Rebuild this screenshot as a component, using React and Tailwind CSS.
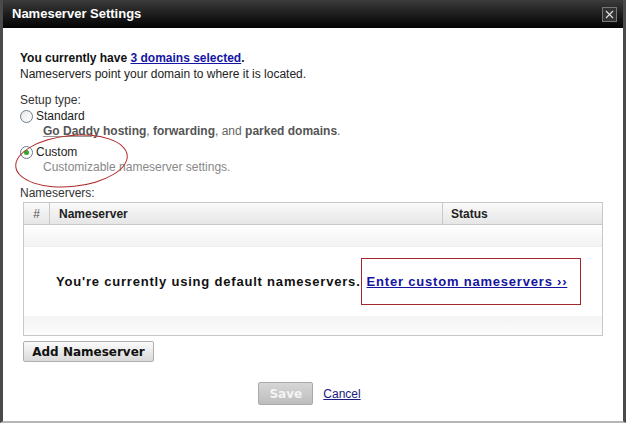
export default function App() {
  return (
    <div className="relative h-[423px] w-[626px] overflow-hidden bg-white font-['Liberation_Sans',Arial,sans-serif] text-[12px] text-[#222]">
      <div className="flex h-full flex-col border-x-[3px] border-b-2 border-x-[#4a4a4a] border-b-[#b5b5b5]">
        {/* title bar */}
        <div className="flex h-[28px] shrink-0 items-center justify-between bg-gradient-to-b from-[#3c3c3c] to-[#050505] pl-[9px] pr-[6px]">
          <span className="text-[13px] font-bold text-white">Nameserver Settings</span>
          <span className="flex h-[15px] w-[15px] items-center justify-center border border-[#777] bg-[#333] text-[13px] leading-none text-white">
            <svg width="9" height="9" viewBox="0 0 9 9" stroke="#ddd" strokeWidth="1.2">
              <path d="M1 1L8 8M8 1L1 8" />
            </svg>
          </span>
        </div>

        <div className="relative flex flex-1 flex-col pl-[17px] pr-[20px] pt-[22px]">
          <p className="font-bold leading-[16px] text-[#111]">
            You currently have <a className="text-[#1515a6] underline">3 domains selected</a>.
          </p>
          <p className="leading-[16px]">Nameservers point your domain to where it is located.</p>

          <p className="mt-[10px] leading-[16px] text-[#333]">Setup type:</p>
          <div className="flex items-center gap-[3px] leading-[16px]">
            <span className="h-[13px] w-[13px] rounded-full border border-[#6b7c8c] bg-gradient-to-br from-[#e8e8e8] to-white" />
            <span>Standard</span>
          </div>
          <p className="pl-[23px] leading-[15px] text-[#666]">
            <b className="text-[#555] underline decoration-[#999]">Go Daddy</b> <b className="text-[#555]">hosting</b>, <b className="text-[#555]">forwarding</b>, and <b className="text-[#555]">parked domains</b>.
          </p>
          <div className="mt-[5px] flex items-center gap-[3px] leading-[16px]">
            <span className="flex h-[13px] w-[13px] items-center justify-center rounded-full border border-[#6b7c8c] bg-white">
              <span className="h-[5px] w-[5px] rounded-full bg-[#2fa82f]" />
            </span>
            <span>Custom</span>
          </div>
          <p className="pl-[23px] leading-[15px] text-[#888]">Customizable nameserver settings.</p>

          <p className="mt-[10px] leading-[16px] text-[#333]">Nameservers:</p>

          <div className="ml-[3px] mt-[1px] border border-[#c8c8c8]">
            <div className="flex h-[22px] items-stretch border-b border-[#c8c8c8] bg-gradient-to-b from-[#fafafa] to-[#e6e6e6] font-bold text-[#222]">
              <div className="flex w-[26px] items-center justify-center border-r border-[#c8c8c8] font-normal text-[#555]">#</div>
              <div className="flex w-[393px] items-center border-r border-[#c8c8c8] pl-[9px]">Nameserver</div>
              <div className="flex flex-1 items-center pl-[8px]">Status</div>
            </div>
            <div className="h-[21px] bg-gradient-to-b from-white to-[#f2f2f2]" />
            <div className="flex h-[70px] items-center border-t border-[#eee] pl-[32px] text-[13px] font-bold tracking-[0.8px]">
              <span className="text-[#111]">You're currently using default nameservers.</span>
              <a className="ml-[6px] text-[#14149e] underline">Enter custom nameservers ››</a>
            </div>
            <div className="h-[19px] bg-gradient-to-b from-[#f4f4f4] to-[#fcfcfc]" />
          </div>

          <div className="ml-[3px] mt-[5px]">
            <button className="h-[21px] w-[131px] rounded-[2px] border border-[#b0b0b0] bg-gradient-to-b from-[#fbfbfb] to-[#d9d9d9] font-['DejaVu_Sans',sans-serif] text-[12px] font-bold text-[#111]">
              Add Nameserver
            </button>
          </div>

          <div className="mt-[20px] flex items-center justify-center gap-[10px] pr-[4px]">
            <button className="h-[23px] w-[55px] rounded-[2px] border border-[#aaa] bg-gradient-to-b from-[#d6d6d6] to-[#bdbdbd] font-['DejaVu_Sans',sans-serif] text-[12px] font-bold text-[#f4f4f4]">
              Save
            </button>
            <a className="text-[#1a1a80] underline">Cancel</a>
          </div>
        </div>
      </div>

      {/* annotations */}
      <div className="pointer-events-none absolute left-[15px] top-[135px] h-[52px] w-[113px] -rotate-[6deg] rounded-[50%] border border-[#b02a2a]" />
      <div className="pointer-events-none absolute left-[361px] top-[258px] h-[47px] w-[220px] border border-[#a0282c]" />
    </div>
  )
}
